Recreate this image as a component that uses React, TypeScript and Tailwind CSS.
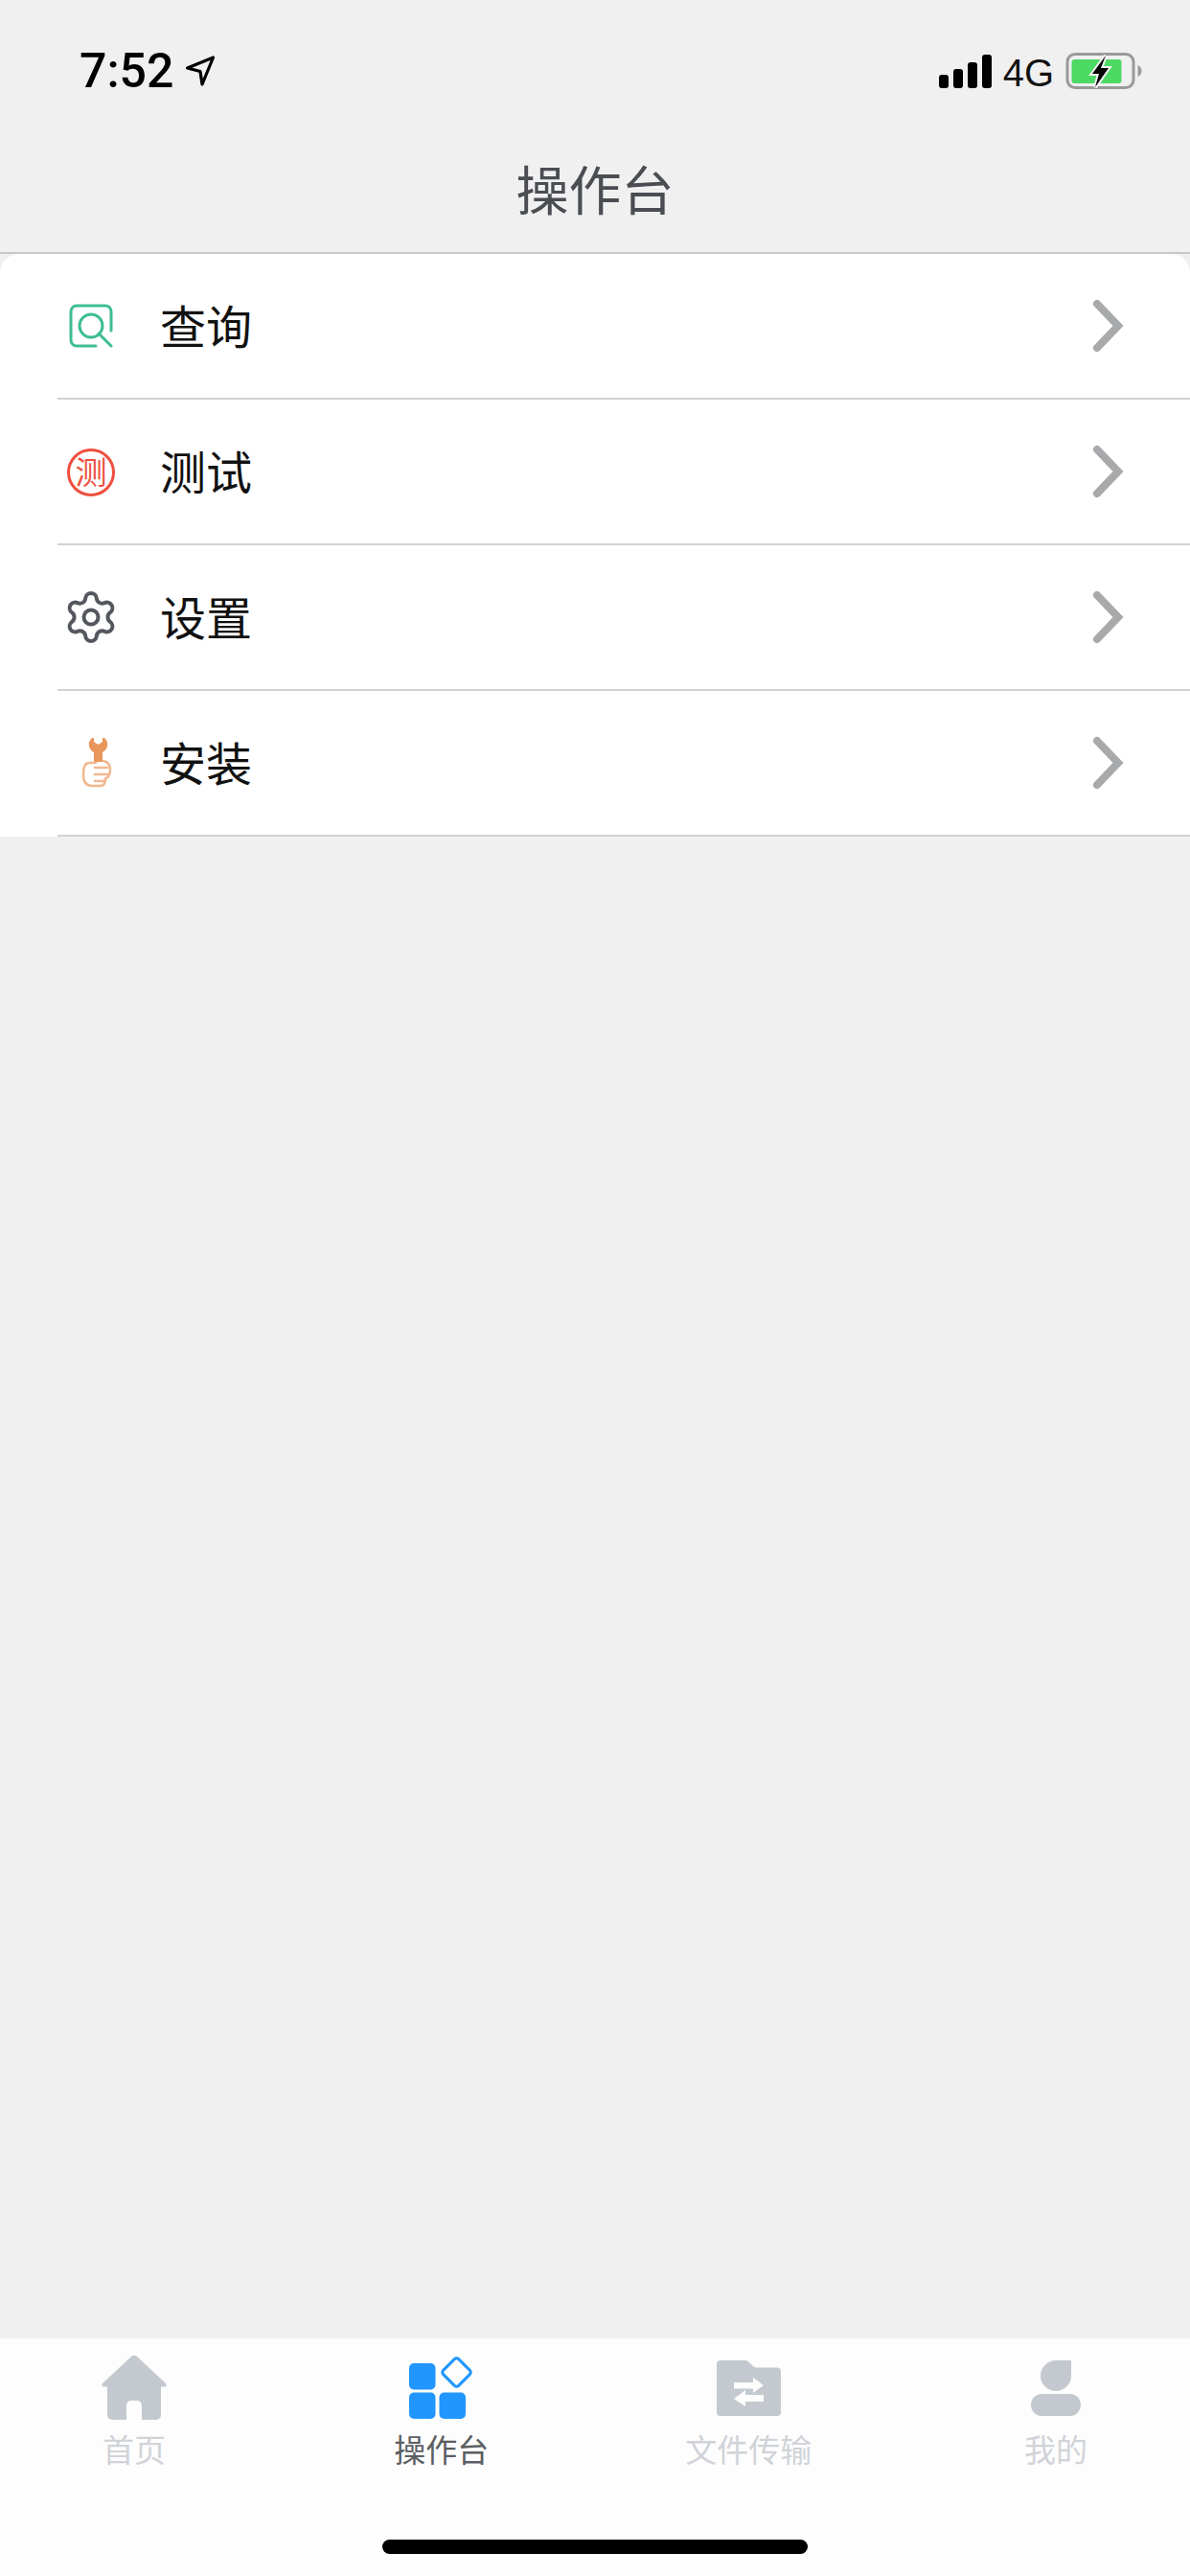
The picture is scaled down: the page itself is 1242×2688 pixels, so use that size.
import React from "react";
import { Settings } from "lucide-react";

const CJK = { fontFamily: '"Noto Sans CJK SC", "Liberation Sans", sans-serif' };

function Chevron() {
  return (
    <svg width="34" height="56" viewBox="0 0 34 56" className="shrink-0">
      <path d="M5 5 L27 28 L5 51" fill="none" stroke="#a8a9ab" strokeWidth="8" strokeLinecap="round" strokeLinejoin="miter" />
    </svg>
  );
}

function QueryIcon() {
  return (
    <svg width="46" height="46" viewBox="0 0 46 46">
      <path d="M28 44 H8 A6 6 0 0 1 2 38 V8 A6 6 0 0 1 8 2 H38 A6 6 0 0 1 44 8 V28" fill="none" stroke="#3dbd95" strokeWidth="3" strokeLinecap="round" />
      <circle cx="23" cy="23" r="12" fill="none" stroke="#3dbd95" strokeWidth="3" />
      <path d="M31 31 L44 44" fill="none" stroke="#3dbd95" strokeWidth="3" strokeLinecap="round" />
    </svg>
  );
}

function TestIcon() {
  return (
    <svg width="52" height="52" viewBox="0 0 52 52" className="mt-[2px]">
      <circle cx="26" cy="26" r="23.500" fill="none" stroke="#ee4f3f" strokeWidth="3" />
      <text x="26" y="38" textAnchor="middle" fontSize="33" fontWeight="400" fill="#ee4f3f" style={CJK}>测</text>
    </svg>
  );
}

function InstallIcon() {
  return (
    <svg width="46" height="52" viewBox="0 0 46 52">
      <path d="M24 0 C19 4 20 12 26 15 L26 25 H35 V15 C41 12 42 4 37 0 L35 0 V4 L30.500 7 L26 4 V0 Z" fill="#e8965a" />
      <path d="M28 26 H21 C16 26 15 32 15 38 C15 46 18 50 24 50 H33 C37 50 38 46 38 42" fill="none" stroke="#f1b890" strokeWidth="2.500" strokeLinecap="round" />
      <path d="M36 24 C41 25 43 28 43 33 C43 38 41 41 39 42" fill="none" stroke="#f1b890" strokeWidth="2.500" strokeLinecap="round" />
      <path d="M27 31 H40 M27 38 H40 M27 45 H38" fill="none" stroke="#f1b890" strokeWidth="2.500" strokeLinecap="round" />
    </svg>
  );
}

function HomeIcon() {
  return (
    <svg width="68" height="67" viewBox="0 0 68 67">
      <path fill="#c4c9cf" d="M31 1 a4 4 0 0 1 6 0 L67 29 a2 2 0 0 1-1.500 3.500 H62 V62 a5 5 0 0 1-5 5 H42 V52 a5 5 0 0 0-5-5 H31 a5 5 0 0 0-5 5 V67 H11 a5 5 0 0 1-5-5 V32.500 H2.500 A2 2 0 0 1 1 29 Z" />
    </svg>
  );
}

function BoardIcon() {
  return (
    <svg width="68" height="67" viewBox="0 0 68 67">
      <rect x="0" y="8" width="27.500" height="27.500" rx="5" fill="#2196ff" />
      <rect x="0" y="38.500" width="27.500" height="27.500" rx="5" fill="#2196ff" />
      <rect x="31.500" y="38.500" width="27.500" height="27.500" rx="5" fill="#2196ff" />
      <rect x="38.200" y="6.200" width="22.600" height="22.600" rx="3" transform="rotate(45 49.500 17.500)" fill="none" stroke="#2196ff" strokeWidth="3" />
    </svg>
  );
}

function FolderIcon() {
  return (
    <svg width="67" height="62" viewBox="0 0 67 62">
      <path fill="#c4c9cf" fillRule="evenodd" d="M4 0 H30 a5 5 0 0 1 3.500 1.500 L38 6 a5 5 0 0 0 3.500 1.500 H63 a4 4 0 0 1 4 4 V54 a4 4 0 0 1-4 4 H4 a4 4 0 0 1-4-4 V4 a4 4 0 0 1 4-4 Z M38 18 V23 H18 V29.500 H38 V34 L49 26 Z M30 31 L18 40 L30 48 V43 H49 V36 H30 Z" />
    </svg>
  );
}

function PersonIcon() {
  return (
    <svg width="52" height="62" viewBox="0 0 52 62">
      <path fill="#c4c9cf" d="M26 0 H42 V16 A16 16 0 1 1 26 0 Z" />
      <rect x="0" y="35" width="52" height="23" rx="11.500" fill="#c4c9cf" />
    </svg>
  );
}

function StatusBar() {
  return (
    <div className="flex h-[107px] items-start justify-between pl-[83px] pr-[50px] pt-[49px]">
      <div className="flex h-[50px] items-center gap-[11px]">
        <span className="text-[50px] leading-[50px] font-medium text-black" style={{ fontFamily: "Roboto, sans-serif" }}>7:52</span>
        <svg width="34" height="34" viewBox="0 0 32 34">
          <path d="M29.500 3 L2.500 14 L16 17.500 L18 31 Z" fill="none" stroke="#000" strokeWidth="3.200" strokeLinejoin="round" />
        </svg>
      </div>
      <div className="flex h-[50px] items-center">
        <svg width="55" height="36" viewBox="0 0 55 36" className="mt-[1px]">
          <rect x="0" y="21" width="10" height="14" rx="3" />
          <rect x="15" y="15" width="10" height="20" rx="3" />
          <rect x="30" y="8" width="10" height="27" rx="3" />
          <rect x="45" y="0" width="10" height="35" rx="3" />
        </svg>
        <span className="ml-[12px] mt-[3px] text-[40px] leading-[40px] text-[#111]" style={{ fontFamily: '"Liberation Sans", sans-serif' }}>4G</span>
        <svg width="80" height="40" viewBox="0 0 80 40" className="ml-[12px]">
          <rect x="2" y="2.500" width="69" height="35" rx="8" fill="none" stroke="#9a9a9a" strokeWidth="3" />
          <rect x="6.500" y="8" width="52" height="25" rx="3" fill="#4cd964" />
          <path d="M75.500 14 C78 15 79.500 17 79.500 20 C79.500 23 78 25 75.500 26 Z" fill="#9a9a9a" />
          <path d="M42 4 L28 23 H35 L31 37 L45 17 H37 Z" fill="#000" stroke="#f0f0f1" strokeWidth="4" strokeLinejoin="miter" style={{ paintOrder: "stroke" }} />
        </svg>
      </div>
    </div>
  );
}

const rows = [
  { label: "查询", icon: <QueryIcon /> },
  { label: "测试", icon: <TestIcon /> },
  { label: "设置", icon: <Settings size={60} strokeWidth={1.6} color="#54585e" /> },
  { label: "安装", icon: <InstallIcon /> },
];

const tabs = [
  { label: "首页", icon: <HomeIcon />, active: false },
  { label: "操作台", icon: <BoardIcon />, active: true },
  { label: "文件传输", icon: <FolderIcon />, active: false },
  { label: "我的", icon: <PersonIcon />, active: false },
];

export default function App() {
  return (
    <div className="flex h-[2688px] w-[1242px] flex-col overflow-hidden bg-[#f0f0f1]" style={CJK}>
      <StatusBar />
      <div className="flex h-[158px] items-center justify-center border-b-2 border-[#c8c8ca] pt-[19px] text-[55px] leading-[70px] text-[#4a4d52]">
        操作台
      </div>
      <div className="overflow-hidden rounded-t-[20px] bg-white">
        {rows.map((r) => (
          <div key={r.label} className="flex h-[152px] items-stretch pl-[60px]">
            <div className="flex flex-1 items-center border-b-2 border-[#d2d2d4] pr-[68px]">
              <div className="flex w-[70px] justify-center">{r.icon}</div>
              <div className="ml-[37px] mb-[5px] flex-1 text-[48px] leading-[60px] text-[#111]">{r.label}</div>
              <Chevron />
            </div>
          </div>
        ))}
      </div>
      <div className="flex-1" />
      <div className="flex h-[248px] flex-col bg-[#fdfdfd]">
        <div className="flex h-[210px] items-start justify-between px-[60px] pt-[18px]">
          {tabs.map((t) => (
            <div key={t.label} className="flex w-[160px] flex-col items-center">
              <div className="flex h-[67px] items-end justify-center">{t.icon}</div>
              <div className={`mt-[8px] whitespace-nowrap text-[33px] leading-[44px] ${t.active ? "text-[#5b5e63]" : "text-[#d0d3d8]"}`}>{t.label}</div>
            </div>
          ))}
        </div>
      </div>
      <div className="relative">
        <div className="absolute bottom-[23px] left-[399px] h-[15px] w-[444px] rounded-full bg-black" />
      </div>
    </div>
  );
}
